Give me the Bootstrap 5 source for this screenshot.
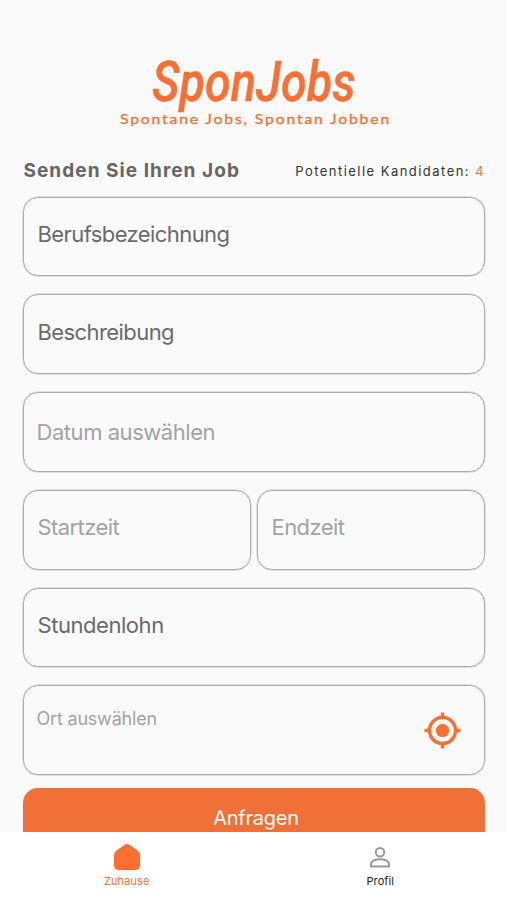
<!DOCTYPE html>
<html lang="de">
<head>
<meta charset="utf-8">
<meta name="viewport" content="width=device-width, initial-scale=1">
<title>SponJobs</title>
<link href="https://cdn.jsdelivr.net/npm/bootstrap@5.3.0/dist/css/bootstrap.min.css" rel="stylesheet">
<style>
  :root { --brand: #fc6f32; }
  body { font-family: Inter, "Liberation Sans", sans-serif; background: #fafafa; }
  .app { height: 900px; overflow: hidden; }
  .screen { min-height: 0; padding: 50px 22.5px 0; }
  .logo { height: 84px; margin: 0 -22.5px; }
  .heading-row { height: 48px; margin-top: 14.5px; padding: 0 0 0 1px; }
  .screen-title { font-size: 19px; line-height: 24px; font-weight: 700; letter-spacing: 1.05px; color: #666; padding-top: 10px; }
  .candidates { font-size: 13px; line-height: 18px; letter-spacing: 1.46px; margin-right: -.5px; color: #333; padding-top: 13px; }
  .brand-text, .tab.brand-text { color: var(--brand); }
  .fields { gap: 18px; }
  .times { gap: 6px; }
  .field { height: 79.75px; padding: 0 14px; border: 1px solid #acacac; box-shadow: 0 0 0 .4px #c4c4c4; border-radius: 15px; color: #6a6a6a; font-size: 22px; line-height: 30px; letter-spacing: -.58px; }
  .pick { color: #a3a3a3; }
  .date { padding-left: 13px; letter-spacing: -.45px; }
  .hourly { letter-spacing: -.45px; }
  .place { height: 90px; padding: 0 22px 0 13px; font-size: 18px; letter-spacing: -.2px; }
  .place-label { padding-bottom: 23px; }
  .label-up { padding-bottom: 5px; }
  .submit { height: 80px; margin-top: 12.75px; padding: 0 0 20px 5px; border: 0; border-radius: 15px 15px 0 0; background: #f07037; color: #fff; font-size: 20px; letter-spacing: -.25px; }
  .tabs { height: 68.5px; flex: none; background: #fff; }
  .tab { padding-top: 11.5px; font-size: 11px; line-height: 14px; color: #222; text-decoration: none; }
  .tab svg { margin-bottom: 3px; }
  .tab span { letter-spacing: .1px; }
</style>
<script src="https://cdn.jsdelivr.net/npm/bootstrap@5.3.0/dist/js/bootstrap.bundle.min.js"></script>
</head>
<body>
<div class="app d-flex flex-column">
  <main class="screen flex-grow-1 overflow-hidden">
    <svg class="logo d-block" width="507" height="84" viewBox="0 50 507 84" fill="#fc6f32" stroke="#fc6f32">
      <text x="152" y="101" font-family="Roboto" font-size="56" font-style="italic" font-weight="500" stroke-width=".4" stroke-linejoin="round" textLength="203.500" lengthAdjust="spacingAndGlyphs">SponJobs</text>
      <text x="120" y="123.500" font-family="Lato" font-size="13.500" font-weight="400" stroke-width=".3" letter-spacing="1.600" textLength="271" lengthAdjust="spacingAndGlyphs">Spontane Jobs, Spontan Jobben</text>
    </svg>
    <div class="heading-row d-flex justify-content-between">
      <h1 class="screen-title mb-0 text-nowrap">Senden Sie Ihren Job</h1>
      <div class="candidates text-nowrap">Potentielle Kandidaten: <span class="brand-text">4</span></div>
    </div>
    <form class="fields d-flex flex-column">
      <div class="field d-flex align-items-center label-up">Berufsbezeichnung</div>
      <div class="field d-flex align-items-center label-up">Beschreibung</div>
      <div class="field pick date d-flex align-items-center">Datum auswählen</div>
      <div class="d-flex times">
        <div class="field pick d-flex align-items-center label-up w-50">Startzeit</div>
        <div class="field pick d-flex align-items-center label-up w-50">Endzeit</div>
      </div>
      <div class="field hourly d-flex align-items-center label-up">Stundenlohn</div>
      <div class="field pick place d-flex align-items-center justify-content-between">
        <span class="place-label">Ort auswählen</span>
        <svg width="39" height="39" viewBox="0 0 39 39" fill="none" stroke="#fc6f32">
          <circle cx="19.5" cy="19.5" r="13" stroke-width="3.4"/>
          <circle cx="19.5" cy="19.5" r="6.6" fill="#fc6f32" stroke="none"/>
          <path d="M19.5 1.5V7M19.5 32v5.500M1.500 19.500H7M32 19.500h5.500" stroke-width="3.4"/>
        </svg>
      </div>
    </form>
    <button class="submit btn w-100" type="button">Anfragen</button>
  </main>
  <nav class="tabs d-flex">
    <a class="tab brand-text w-50 d-flex flex-column align-items-center" href="#">
      <svg width="28" height="28" viewBox="0 0 28 28" fill="#fc6f32"><path d="M12 1.600q2-1.200 4 0l8.500 6q2.500 1.900 2.500 4.800V22q0 5-5 5H6q-5 0-5-5v-9.600q0-2.900 2.500-4.800z"/></svg>
      <span>Zuhause</span>
    </a>
    <a class="tab w-50 d-flex flex-column align-items-center" href="#">
      <svg width="28" height="28" viewBox="0 0 28 28" fill="none" stroke="#999" stroke-width="2"><circle cx="14" cy="9.200" r="4.200"/><path d="M5 23.500v-2.500c0-3.200 5-4.800 9-4.800s9 1.600 9 4.800v2.500z"/></svg>
      <span>Profil</span>
    </a>
  </nav>
</div>
</body>
</html>
